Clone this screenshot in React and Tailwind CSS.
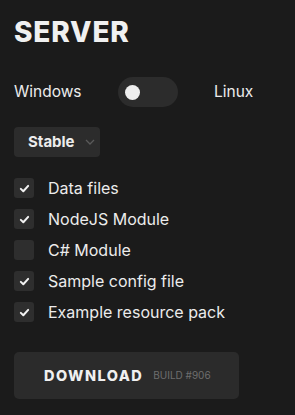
import { useState } from 'react';

const items = [
    { label: 'Data files', checked: true },
    { label: 'NodeJS Module', checked: true },
    { label: 'C# Module', checked: false },
    { label: 'Sample config file', checked: true },
    { label: 'Example resource pack', checked: true },
];

function Check() {
    return (
        <svg width="11" height="11" viewBox="0 0 12 12" fill="none">
            <path d="M2 6.4 4.7 9 10 3.2" stroke="#f2f2f2" strokeWidth="2.2" strokeLinecap="round" strokeLinejoin="round" />
        </svg>
    );
}

export default function App() {
    const [opts, setOpts] = useState(items);
    const [linux, setLinux] = useState(false);

    return (
        <div className="min-h-[415px] w-full bg-[#1b1b1b] px-[14px] pt-[14px] font-['Inter',sans-serif] text-[#ececec]">
            <h1 className="text-[28px] font-extrabold leading-[36px] tracking-[0.03em] text-[#f0f0f0]">SERVER</h1>

            {/* Platform */}
            <div className="mt-[27px] flex items-center text-[15.5px]">
                <span className="w-[104px]">Windows</span>
                <button
                    onClick={() => setLinux(!linux)}
                    className="flex h-[30px] w-[60px] items-center rounded-full bg-[#2c2c2c] px-[7px]"
                >
                    <span className={'block h-[15px] w-[15px] rounded-full bg-[#eeeeee] ' + (linux ? 'ml-auto' : '')} />
                </button>
                <span className="ml-[36px]">Linux</span>
            </div>

            {/* Channel */}
            <div className="mt-[20px] flex h-[30px] w-[86px] items-center rounded-[4px] bg-[#2c2c2c] pl-[14px] pr-[5px]">
                <span className="text-[15px] font-bold">Stable</span>
                <svg className="ml-auto" width="10" height="6" viewBox="0 0 10 6" fill="none">
                    <path d="M1 1l4 4 4-4" stroke="#5a5a5a" strokeWidth="1.3" />
                </svg>
            </div>

            {/* Components */}
            <ul className="mt-[21px] flex flex-col gap-[11px]">
                {opts.map((o, i) => (
                    <li
                        key={o.label}
                        className="flex h-[20px] cursor-pointer items-center"
                        onClick={() => setOpts(opts.map((x, j) => (j === i ? { ...x, checked: !x.checked } : x)))}
                    >
                        <span className="flex h-[20px] w-[20px] items-center justify-center rounded-[3px] bg-[#2e2e2e]">
                            {o.checked && <Check />}
                        </span>
                        <span className="ml-[14px] text-[16px]">{o.label}</span>
                    </li>
                ))}
            </ul>

            <button className="mt-[30px] flex h-[47px] w-[225px] items-center rounded-[5px] bg-[#2b2b2b] pl-[30px]">
                <span className="text-[14.5px] font-extrabold tracking-[0.1em] text-[#f0f0f0]">DOWNLOAD</span>
                <span className="ml-[10px] text-[10px] text-[#6e6e6e]">BUILD #906</span>
            </button>
        </div>
    );
}
